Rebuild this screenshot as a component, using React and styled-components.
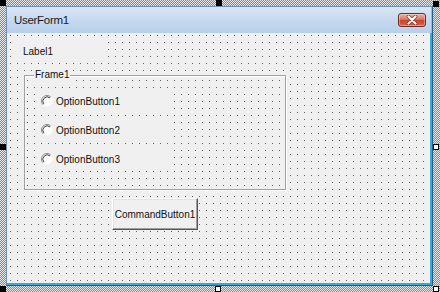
import React from 'react'
import styled, { createGlobalStyle, css } from 'styled-components'

const GlobalStyle = createGlobalStyle`
  html, body { margin: 0; padding: 0; }
  body { font-family: "Liberation Sans", Arial, sans-serif; }
`

const FACE = '#f0f0f0'

// design-time grid: one dark pixel every 7px
const dotted = css`
  background-color: #5e5e5e;
  background-image:
    linear-gradient(to right, transparent 1px, ${FACE} 1px),
    linear-gradient(to bottom, transparent 1px, ${FACE} 1px);
  background-size: 7px 7px;
  background-position: 3px 2px;
`

const Designer = styled.div`
  position: relative;
  width: 440px;
  height: 292px;
  box-sizing: border-box;
  padding: 6px 7px 6px 6px;
  display: flex;
  background: repeating-conic-gradient(#8c8c8c 0% 25%, #e4e4e4 0% 50%) 0 0 / 2px 2px;
`

const Handle = styled.span`
  position: absolute;
  width: 6px;
  height: 6px;
  box-sizing: border-box;
  border: 1px solid #000;
  background: ${p => (p.$filled ? '#000' : '#fff')};
`

const Window = styled.div`
  flex: 1;
  display: flex;
  flex-direction: column;
  border-left: 1px solid #6d8fb8;
  border-top: 1px solid #6d8fb8;
  border-right: 1px solid #1f5f8c;
  border-bottom: 1px solid #1f5f8c;
  min-width: 0;
`

const TitleBar = styled.div`
  height: 25px;
  display: flex;
  align-items: center;
  justify-content: space-between;
  padding: 0 5px 1px 7px;
  background: linear-gradient(#dbe7f5, #c2d6ee 60%, #b9cfea);
  border-right: 1px solid #9db8d8;
`

const Title = styled.span`
  font-size: 11.5px;
  color: #1b1b1b;
  letter-spacing: -0.3px;
`

const CloseButton = styled.div`
  width: 28px;
  height: 14px;
  box-sizing: border-box;
  border: 1px solid #6e2c22;
  border-radius: 3px;
  display: flex;
  align-items: center;
  justify-content: center;
  background: linear-gradient(#eab0a3, #d97a66 45%, #c7412b 50%, #d4654d);
  box-shadow: inset 0 0 0 1px rgba(255, 255, 255, 0.35);
`

const Body = styled.div`
  flex: 1;
  display: flex;
  flex-direction: column;
  align-items: flex-start;
  border-right: 2px solid #36a9d8;
  border-bottom: 2px solid #36a9d8;
  ${dotted}
`

const Label = styled.div`
  margin: 6px 0 0 7px;
  width: 94px;
  height: 24px;
  box-sizing: border-box;
  padding-left: 9px;
  display: flex;
  align-items: center;
  font-size: 10px;
  color: #111;
  background: ${FACE};
`

const Frame = styled.fieldset`
  margin: 6px 0 0 17px;
  padding: 9px 0 0 11px;
  width: 262px;
  height: 121px;
  box-sizing: border-box;
  border: 1px solid #a0a0a0;
  box-shadow: inset 1px 1px 0 #fff, 1px 1px 0 #fff;
  display: flex;
  flex-direction: column;
  gap: 7px;
  ${dotted}
  background-position: 2px 4px;
`

const Caption = styled.legend`
  margin-left: -2px;
  padding: 0 1px;
  font-size: 10px;
  line-height: 12px;
  color: #111;
  background: ${FACE};
`

const Option = styled.label`
  width: 134px;
  height: 22px;
  box-sizing: border-box;
  padding-left: 5px;
  display: flex;
  align-items: center;
  gap: 3px;
  font-size: 10px;
  color: #111;
  background: ${FACE};
`

const CommandButton = styled.div`
  margin: 8px 0 0 105px;
  width: 86px;
  height: 32px;
  box-sizing: border-box;
  display: flex;
  align-items: center;
  justify-content: center;
  font-size: 10px;
  color: #111;
  background: ${FACE};
  border-top: 1px solid #fff;
  border-left: 1px solid #fff;
  border-right: 1px solid #555;
  border-bottom: 1px solid #555;
  box-shadow: inset -1px -1px 0 #a0a0a0, inset 1px 1px 0 #e3e3e3;
`

function Radio() {
  return (
    <svg width="12" height="12" viewBox="0 0 12 12">
      <circle cx="6" cy="6" r="5.5" fill="#fff" />
      <path d="M2.1 9.9 A5.5 5.5 0 0 1 9.9 2.1" fill="none" stroke="#8a8a8a" strokeWidth="1" />
      <path d="M2.9 9.1 A4.4 4.4 0 0 1 9.1 2.9" fill="none" stroke="#444" strokeWidth="1" />
      <path d="M9.9 2.1 A5.5 5.5 0 0 1 2.1 9.9" fill="none" stroke="#f4f4f4" strokeWidth="1" />
    </svg>
  )
}

function CloseGlyph() {
  return (
    <svg width="12" height="10" viewBox="0 0 12 10">
      <path d="M2.5 1.5 L9.5 8.5 M9.5 1.5 L2.5 8.5" stroke="#7a2a1e" strokeWidth="3.4" strokeLinecap="round" />
      <path d="M2.5 1.5 L9.5 8.5 M9.5 1.5 L2.5 8.5" stroke="#fff" strokeWidth="2.2" strokeLinecap="round" />
    </svg>
  )
}

const handles = [
  { x: 0, y: 0, filled: true },
  { x: 216, y: 0, filled: true },
  { x: 433, y: 1, filled: true },
  { x: 0, y: 144, filled: true },
  { x: 0, y: 286, filled: true },
  { x: 215, y: 286, filled: false },
  { x: 433, y: 286, filled: false },
  { x: 433, y: 144, filled: false },
]

export default function App() {
  return (
    <>
      <GlobalStyle />
      <Designer>
        <Window>
          <TitleBar>
            <Title>UserForm1</Title>
            <CloseButton>
              <CloseGlyph />
            </CloseButton>
          </TitleBar>
          <Body>
            <Label>Label1</Label>
            <Frame>
              <Caption>Frame1</Caption>
              {[1, 2, 3].map(n => (
                <Option key={n}>
                  <Radio />
                  OptionButton{n}
                </Option>
              ))}
            </Frame>
            <CommandButton>CommandButton1</CommandButton>
          </Body>
        </Window>
        {handles.map((h, i) => (
          <Handle key={i} $filled={h.filled} style={{ left: h.x, top: h.y }} />
        ))}
      </Designer>
    </>
  )
}
